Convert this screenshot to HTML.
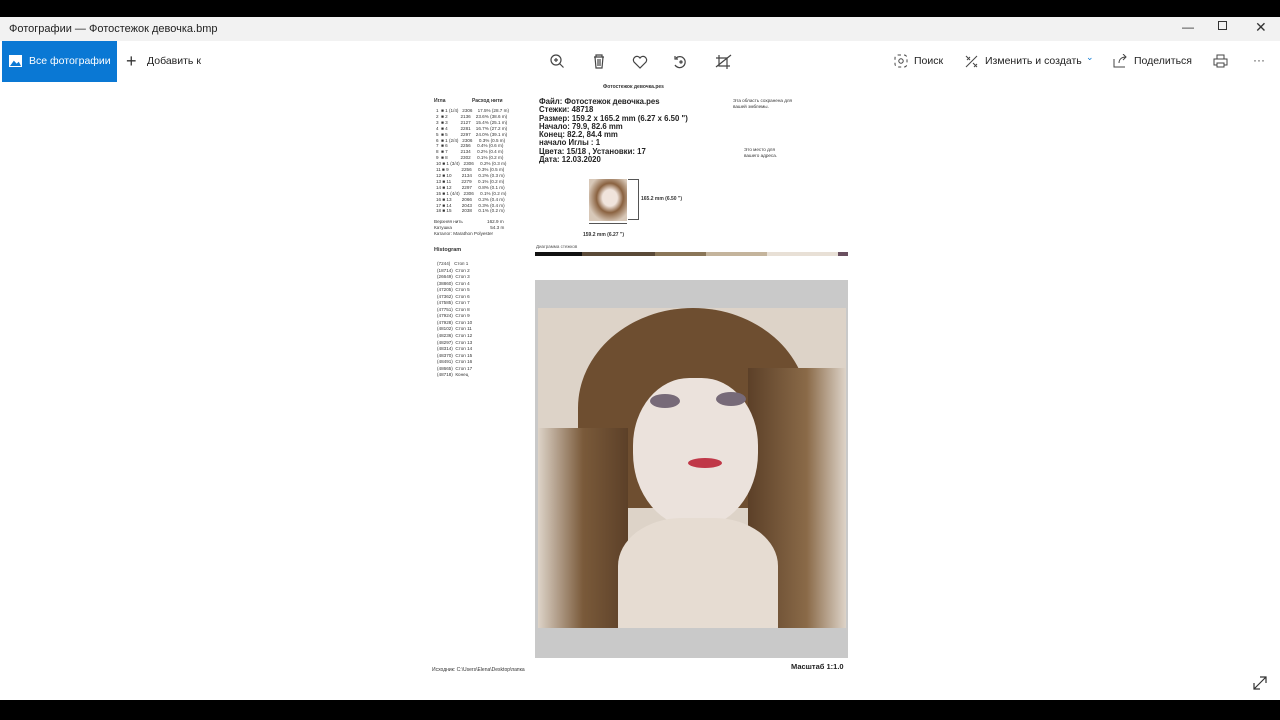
<!DOCTYPE html>
<html><head><meta charset="utf-8"><style>
*{margin:0;padding:0;box-sizing:border-box}
body{width:1280px;height:720px;background:#000;position:relative;overflow:hidden;font-family:"Liberation Sans","Noto Sans CJK SC",sans-serif;color:#000}
.a{position:absolute}
.t{font-size:4.6px;line-height:5.9px;color:#333;white-space:pre}
</style></head><body>
<div class="a" style="left:0;top:17px;width:1280px;height:683px;background:#fff"></div>
<div class="a" style="left:0;top:17px;width:1280px;height:24px;background:#f2f2f2"></div>
<div class="a" style="left:9px;top:23px;font-size:11px;color:#222">Фотографии — Фотостежок девочка.bmp</div>
<div class="a" style="left:1182px;top:20px;font-size:12px;color:#333">—</div>
<div class="a" style="left:1218px;top:21px;width:9px;height:9px;border:1px solid #333"></div>
<div class="a" style="left:1255px;top:19px;font-size:14px;color:#333">✕</div>
<div class="a" style="left:2px;top:41px;width:115px;height:41px;background:#0a78d4"></div>
<div class="a" style="left:9px;top:55px;width:13px;height:12px;background:#fff;border:1px solid #fff"><div style="width:11px;height:6px;margin-top:4px;background:#0a78d4;clip-path:polygon(0 100%,35% 10%,60% 60%,80% 30%,100% 100%)"></div></div>
<div class="a" style="left:29px;top:55px;font-size:10.5px;color:#fff">Все фотографии</div>
<div class="a" style="left:126px;top:51px;font-size:18px;color:#333;font-weight:300">+</div>
<div class="a" style="left:147px;top:55px;font-size:10.5px;color:#222">Добавить к</div>
<svg class="a" style="left:548px;top:53px" width="190" height="18" fill="none" stroke="#444" stroke-width="1.2">
<circle cx="8" cy="7" r="5"/><path d="M11.5 10.5l4 4M6 7h4M8 5v4"/>
<path d="M46 4h10M48 4v-2h6v2M47 4l1 11h6l1-11M50 6v7M52 6v7"/>
<path d="M92 15l-6-6a3 3 0 0 1 6-4a3 3 0 0 1 6 4z"/>
<path d="M128 5a5.5 5.5 0 1 1-1 7M127 3v3h3"/><circle cx="133" cy="9" r="1"/>
<path d="M171 2v11h11M168 5h11v11"/><path d="M168 14l15-12"/>
</svg>
<svg class="a" style="left:894px;top:54px" width="14" height="14" fill="none" stroke="#444"><rect x="1" y="1" width="12" height="12" rx="3" stroke-dasharray="3 3"/><circle cx="7" cy="7" r="2.2"/></svg>
<div class="a" style="left:914px;top:55px;font-size:10.5px;color:#222">Поиск</div>
<svg class="a" style="left:964px;top:54px" width="15" height="15" fill="none" stroke="#444"><path d="M2 13L13 2M2 2l4 4M9 9l4 4M3 6l3-3M10 13l3-3"/></svg>
<div class="a" style="left:985px;top:55px;font-size:10.5px;color:#222">Изменить и создать</div>
<div class="a" style="left:1086px;top:52px;font-size:9px;color:#0a78d4">⌄</div>
<svg class="a" style="left:1113px;top:54px" width="15" height="14" fill="none" stroke="#444"><path d="M1 5v8h11M6 9c0-4 3-6 7-6M10 0l3 3-3 3"/></svg>
<div class="a" style="left:1134px;top:55px;font-size:10.5px;color:#222">Поделиться</div>
<svg class="a" style="left:1213px;top:54px" width="15" height="14" fill="none" stroke="#444"><rect x="1" y="5" width="13" height="6"/><rect x="4" y="1" width="7" height="4"/><rect x="4" y="9" width="7" height="4" fill="#fff"/></svg>
<div class="a" style="left:1253px;top:53px;font-size:12px;color:#444">···</div>
<div class="a" style="left:603px;top:84px;font-size:5px;font-weight:bold;color:#333">Фотостежок девочка.pes</div>
<div class="a" style="left:434px;top:98px;font-size:5px;font-weight:bold;color:#333">Игла</div>
<div class="a" style="left:472px;top:98px;font-size:5px;font-weight:bold;color:#333">Расход нити</div>
<div class="a t" style="left:436px;top:108px">1  ■ 1 (1/4)   2306    17.5% (28.7 m)
2  ■ 2          2136    23.6% (38.6 m)
3  ■ 3          2127    15.4% (25.1 m)
4  ■ 4          2281    16.7% (27.2 m)
5  ■ 5          2297    24.0% (39.1 m)
6  ■ 1 (2/4)   2306     0.3% (0.5 m)
7  ■ 6          2256     0.4% (0.6 m)
8  ■ 7          2134     0.2% (0.4 m)
9  ■ 8          2302     0.1% (0.2 m)
10 ■ 1 (3/4)   2306     0.2% (0.3 m)
11 ■ 9          2256     0.3% (0.5 m)
12 ■ 10        2134     0.2% (0.3 m)
13 ■ 11        2279     0.1% (0.2 m)
14 ■ 12        2297     0.8% (0.1 m)
15 ■ 1 (4/4)   2306     0.1% (0.2 m)
16 ■ 13        2066     0.2% (0.4 m)
17 ■ 14        2043     0.3% (0.4 m)
18 ■ 15        2038     0.1% (0.2 m)</div>
<div class="a t" style="left:434px;top:219px">Верхняя нить                   162.9 m
Катушка                              54.3 m
Каталог: Marathon Polyester</div>
<div class="a" style="left:434px;top:247px;font-size:5.5px;font-weight:bold;color:#333">Histogram</div>
<div class="a t" style="left:437px;top:261px;line-height:6.55px">(7244)   Стоп 1
(18714)  Стоп 2
(26649)  Стоп 3
(38860)  Стоп 4
(47205)  Стоп 5
(47362)  Стоп 6
(47585)  Стоп 7
(47751)  Стоп 8
(47924)  Стоп 9
(47928)  Стоп 10
(48102)  Стоп 11
(48236)  Стоп 12
(48297)  Стоп 13
(48314)  Стоп 14
(48370)  Стоп 15
(48491)  Стоп 16
(48665)  Стоп 17
(48718)  Конец</div>
<div class="a" style="left:539px;top:98px;font-size:7.8px;line-height:8.3px;font-weight:bold;color:#222">Файл: Фотостежок девочка.pes<br>Стежки: 48718<br>Размер: 159.2 x 165.2 mm (6.27 x 6.50 ")<br>Начало: 79.9, 82.6 mm<br>Конец: 82.2, 84.4 mm<br>начало Иглы : 1<br>Цвета: 15/18 , Установки: 17<br>Дата: 12.03.2020</div>
<div class="a t" style="left:733px;top:98px">Эта область сохранена для
вашей эмблемы.</div>
<div class="a t" style="left:744px;top:147px">Это место для
вашего адреса.</div>
<div class="a" style="left:589px;top:179px;width:38px;height:42px;background:radial-gradient(ellipse at 55% 45%,#f0e4dc 25%,#8a6240 45%,#d8c8b8 75%)"></div>
<div class="a" style="left:628px;top:179px;width:11px;height:41px;border:1px solid #555;border-left:none"></div>
<div class="a" style="left:589px;top:223px;width:38px;height:1px;background:#555"></div>
<div class="a" style="left:641px;top:196px;font-size:5px;font-weight:bold;color:#333">165.2 mm (6.50 ")</div>
<div class="a" style="left:583px;top:232px;font-size:5px;font-weight:bold;color:#333">159.2 mm (6.27 ")</div>
<div class="a" style="left:536px;top:244px;font-size:4.5px;color:#555">Диаграмма стежков</div>
<div class="a" style="left:535px;top:252px;height:4px;width:313px;background:linear-gradient(90deg,#111 0 47px,#5a4a38 47px 120px,#8a7658 120px 171px,#c4b49c 171px 232px,#e8e0d6 232px 303px,#6a5060 303px)"></div>
<div class="a" style="left:535px;top:280px;width:313px;height:378px;background:#c9c9c9"></div>
<div class="a" style="left:538px;top:308px;width:308px;height:320px;background:#ddd3c8;overflow:hidden">
<div class="a" style="left:40px;top:0;width:230px;height:200px;background:#6e4e30;border-radius:50% 50% 20% 20%"></div>
<div class="a" style="left:0;top:120px;width:90px;height:200px;background:linear-gradient(90deg,#ddd3c8,#7a5a3a 50%,#5c4028)"></div>
<div class="a" style="left:210px;top:60px;width:98px;height:260px;background:linear-gradient(90deg,#5c4028,#8a6a48 60%,#ddd3c8)"></div>
<div class="a" style="left:95px;top:70px;width:125px;height:150px;background:#ebe2dc;border-radius:45% 45% 50% 50%"></div>
<div class="a" style="left:112px;top:86px;width:30px;height:14px;background:#776a78;border-radius:50%"></div>
<div class="a" style="left:178px;top:84px;width:30px;height:14px;background:#776a78;border-radius:50%"></div>
<div class="a" style="left:150px;top:150px;width:34px;height:10px;background:#c03848;border-radius:50%"></div>
<div class="a" style="left:80px;top:210px;width:160px;height:120px;background:#e6dcd2;border-radius:40% 40% 0 0"></div>
</div>
<div class="a" style="left:432px;top:667px;font-size:5px;color:#333">Исходник: C:\Users\Elena\Desktop\папка</div>
<div class="a" style="left:791px;top:662px;font-size:7.5px;font-weight:bold;color:#222">Масштаб 1:1.0</div>
<svg class="a" style="left:1252px;top:675px" width="16" height="16" fill="none" stroke="#333" stroke-width="1.2"><path d="M2 14L14 2M8 2h6v6M2 8v6h6"/></svg>
</body></html>
